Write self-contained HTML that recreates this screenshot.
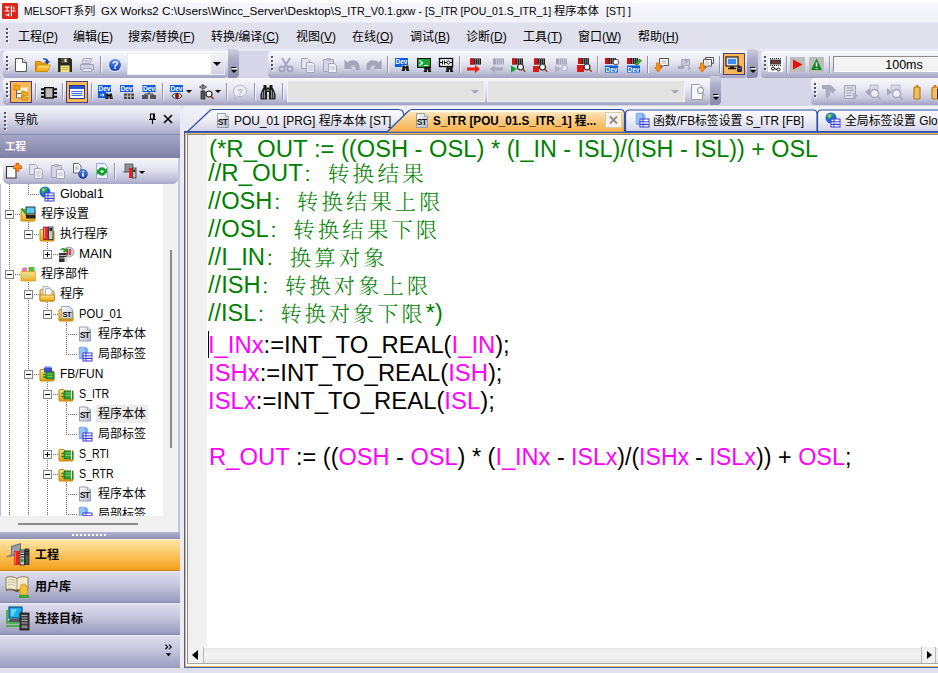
<!DOCTYPE html>
<html lang="zh-CN">
<head>
<meta charset="utf-8">
<title>MELSOFT GX Works2</title>
<style>
*{box-sizing:border-box;margin:0;padding:0}
html,body{width:938px;height:673px;overflow:hidden}
body{position:relative;background:#dedeee;font-family:"Liberation Sans","Noto Sans CJK SC",sans-serif;font-size:12px;color:#000}
.abs,.abs-all *{position:absolute}
.sx{display:inline-block;transform-origin:0 50%;white-space:pre}
svg{position:absolute;overflow:visible}
#title{left:0;top:0;width:938px;height:22px;background:linear-gradient(#fff 0,#fff 2px,#f5f5fb 3px,#f1f1f8 100%)}
#title .t{left:23px;top:2.5px;height:16px;line-height:16px;font-size:11px}
#menu{left:0;top:22px;width:938px;height:29px;background:linear-gradient(#ececf5 0,#e1e1ed 1.5px,#e0e0ec 26px,#e9e9f3 27.5px,#e9e9f3 100%)}
#menu .m{top:6.5px;height:16px;line-height:16px;font-size:12px;white-space:pre}
.grip{width:3px}
.grip i{display:block;width:2px;height:2px;background:#50506e;margin-bottom:2px;box-shadow:1px 1px 0 #fff}
.tbrow{left:0;width:938px;height:28px;background:#d6d6e8}
.panel{top:0;height:27px;border-radius:4px 0 4px 4px;background:linear-gradient(#f8f8fc 0,#e8e8f3 38%,#c8c8de 74%,#a2a2c2 100%)}
.ovf{top:-2px;height:29px;width:11px;border-radius:0 4px 4px 0;background:linear-gradient(#d0d0e2 0,#b0b0cc 30%,#8a8aac 100%)}
.ovf:after{content:"";position:absolute;left:3px;top:18px;width:5px;height:1px;background:#000;box-shadow:1px 1px 0 #fff}
.ovf:before{content:"";position:absolute;left:3px;top:21px;border:3px solid transparent;border-top:3px solid #000;border-bottom:0;width:0;height:0}
.sep{top:5px;width:2px;height:17px;border-left:1px solid #9292ae;border-right:1px solid #f6f6fc}
.hot{width:22px;height:22px;top:3px;background:#fbb755;border:1px solid #4c3e78}
.ic{width:16px;height:16px;top:6px}
.combo{top:3px;height:22px}
#nav{left:0;top:106px;width:180px;height:562px;background:#d8d8ea}
#nav svg,#tree svg{position:absolute}
#code{left:0;top:0;width:938px;height:0;font-family:"Liberation Sans","Noto Serif CJK SC",sans-serif;font-size:23.5px}
#code .ln{position:absolute;left:208px;height:0;line-height:0;white-space:pre}
#code .ln .sx{position:absolute;left:0;top:-21px;height:28px;line-height:28px;transform-origin:0 75%}
#code .g{color:#008000}
#code b{font-weight:normal;color:#ff00ff}
#code .zh{font-family:"Noto Serif CJK SC",serif;font-size:21px;letter-spacing:3.3px;font-weight:300}
</style>
</head>
<body>
<svg width="0" height="0" style="left:-10px;top:-10px"><defs>
<linearGradient id="gy" x1="0" y1="0" x2="0" y2="1"><stop offset="0" stop-color="#ffe27a"/><stop offset="1" stop-color="#f0a400"/></linearGradient>
<linearGradient id="gb" x1="0" y1="0" x2="0" y2="1"><stop offset="0" stop-color="#5c8cf0"/><stop offset="1" stop-color="#0a3cb4"/></linearGradient>
<linearGradient id="gf" x1="0" y1="0" x2="0" y2="1"><stop offset="0" stop-color="#ffe48a"/><stop offset="1" stop-color="#e8a410"/></linearGradient>
<linearGradient id="gst" x1="0" y1="0" x2="1" y2="1"><stop offset="0" stop-color="#fff"/><stop offset="1" stop-color="#b4bccc"/></linearGradient>
</defs></svg>
<div id="title" class="abs">
  <svg style="left:2px;top:3px" width="16" height="16" viewBox="0 0 17 17"><rect width="17" height="17" rx="1.5" fill="#de241b"/><path d="M3 4.5h5M5.5 4.5v4M3 8.5h5M10 3v11M10 8.5h4.5M12.5 4v3M7 11v3M4 12.5h3" stroke="#fff" stroke-width="1.3" fill="none"/></svg>
  <div class="abs t" id="ttl"><span class="sx abs" style="left:1px;top:0;transform:scaleX(0.9335)">MELSOFT</span><span class="sx abs" style="left:50.3px;top:0;transform:scaleX(1.0)">系列</span><span class="sx abs" style="left:78.2px;top:0;transform:scaleX(1.0289)">GX Works2 </span><span class="sx abs" style="left:139px;top:0;transform:scaleX(1.0699)">C:\Users\Wincc_Server\Desktop\</span><span class="sx abs" style="left:311px;top:0;transform:scaleX(0.9856)">S_ITR_V0.1.gxw - </span><span class="sx abs" style="left:402px;top:0;transform:scaleX(0.9547)">[S_ITR [POU_01.S_ITR_1] </span><span class="sx abs" style="left:531px;top:0;transform:scaleX(1.02)">程序本体</span><span class="sx abs" style="left:582.5px;top:0;transform:scaleX(0.9512)">[ST] ]</span></div>
</div>
<div id="menu" class="abs">
  <div class="abs grip" style="left:6px;top:6px"><i></i><i></i><i></i><i></i></div>
  <div class="abs m" style="left:18px"><span class="sx">工程(<u>P</u>)</span></div>
  <div class="abs m" style="left:73px"><span class="sx">编辑(<u>E</u>)</span></div>
  <div class="abs m" style="left:128px"><span class="sx">搜索/替换(<u>F</u>)</span></div>
  <div class="abs m" style="left:211px"><span class="sx">转换/编译(<u>C</u>)</span></div>
  <div class="abs m" style="left:296px"><span class="sx">视图(<u>V</u>)</span></div>
  <div class="abs m" style="left:352px"><span class="sx">在线(<u>O</u>)</span></div>
  <div class="abs m" style="left:410px"><span class="sx">调试(<u>B</u>)</span></div>
  <div class="abs m" style="left:466px"><span class="sx">诊断(<u>D</u>)</span></div>
  <div class="abs m" style="left:523px"><span class="sx">工具(<u>T</u>)</span></div>
  <div class="abs m" style="left:578px"><span class="sx">窗口(<u>W</u>)</span></div>
  <div class="abs m" style="left:638px"><span class="sx">帮助(<u>H</u>)</span></div>
</div>
<div class="abs tbrow" style="top:51px">
<div class="abs panel" style="left:3px;width:225px"></div><div class="abs ovf" style="left:228px"></div>
<div class="abs grip" style="left:6px;top:5px"><i></i><i></i><i></i><i></i></div>
<svg class="ic" style="left:13px;top:6px" viewBox="0 0 16 16"><g><path d="M2.500 1.500h7l4 4v9h-11z" fill="#fff" stroke="#555" stroke-width="1"/><path d="M9.500 1.500v4h4" fill="#e8e8e8" stroke="#555" stroke-width="1"/></g></svg>
<svg class="ic" style="left:35px;top:6px" viewBox="0 0 16 16"><g><path d="M.5 4.500h5l1 1.500h5.500v8.500H.5z" fill="#e8a000" stroke="#b87400" stroke-width=".8"/><path d="M.5 14.500L3 8h12.500l-3 6.500z" fill="url(#gy)" stroke="#c88a00" stroke-width=".8"/><path d="M8 1.500c3-.8 5 .5 5.300 2.800h1.900l-2.900 3-2.900-3h1.700C11 3 9.800 2.200 8 2.800z" fill="#1446b4"/></g></svg>
<svg class="ic" style="left:57px;top:6px" viewBox="0 0 16 16"><g><path d="M1 1h12.500L15 2.500V15H1z" fill="#2c2c1c"/><rect x="4" y="1" width="7" height="5" fill="#50503c"/><rect x="7.500" y="1.800" width="2" height="3.200" fill="#e8e8e8"/><rect x="3.500" y="8.500" width="9" height="6.500" fill="#f4e48c"/><path d="M4.500 10.500h7M4.500 12.500h7" stroke="#c0a840" stroke-width=".9"/></g></svg>
<svg class="ic" style="left:79px;top:6px" viewBox="0 0 16 16"><g><path d="M4.500 1.500h8l-1.500 5h-8z" fill="#e8e8f2" stroke="#a8a8bc"/><path d="M1.500 7.500h13v5h-13z" fill="#d0d0de" stroke="#a4a4b8"/><path d="M3.500 11.500h9v3h-9z" fill="#e4e4ee" stroke="#a8a8bc"/><path d="M5.500 3.500h5M5 5h5" stroke="#b4b4c6" stroke-width=".8"/></g></svg>
<div class="abs sep" style="left:100px"></div>
<svg class="ic" style="left:107px;top:6px" viewBox="0 0 16 16"><g><circle cx="8" cy="8" r="7" fill="#e8eefc"/><circle cx="8" cy="8" r="6" fill="url(#gb)"/><text x="8" y="12" font-family="Liberation Sans,sans-serif" font-size="11" font-weight="bold" fill="#fff" text-anchor="middle">?</text></g></svg>
<div class="abs combo" style="left:127px;width:98px;top:2px;background:#fff;border:1px solid #e9e9f3"><div class="abs" style="right:0;top:0;width:13px;height:20px;background:linear-gradient(#f4f4fa,#d0d0e2)"></div><div class="abs" style="right:3px;top:8px;border:4px solid transparent;border-top:4px solid #000;border-bottom:0"></div></div>
<div class="abs panel" style="left:268px;width:479px"></div><div class="abs ovf" style="left:747px"></div>
<div class="abs grip" style="left:271px;top:5px"><i></i><i></i><i></i><i></i></div>
<svg class="ic" style="left:278px;top:6px" viewBox="0 0 16 16"><g><path d="M4 1l5.500 9M12 1L6.500 10" stroke="#a2a2b8" stroke-width="1.800" fill="none"/><circle cx="4" cy="12" r="2.600" fill="none" stroke="#a2a2b8" stroke-width="1.700"/><circle cx="12" cy="12" r="2.600" fill="none" stroke="#a2a2b8" stroke-width="1.700"/></g></svg>
<svg class="ic" style="left:300px;top:6px" viewBox="0 0 16 16"><g><path d="M1.500 1.500h6l2 2v8h-8z" fill="#e4e4ee" stroke="#a6a6ba"/><path d="M6.500 5.500h6l2 2v8h-8z" fill="#eeeef6" stroke="#a6a6ba"/><path d="M8 9h5M8 11h5M8 13h5" stroke="#b8b8c8" stroke-width=".8"/></g></svg>
<svg class="ic" style="left:322px;top:6px" viewBox="0 0 16 16"><g><path d="M1.500 2.500h10v12h-10z" fill="#d4d4e2" stroke="#a6a6ba"/><rect x="4" y="1" width="5" height="3" fill="#b8b8cc"/><path d="M6.500 6.500h6l2 2v7h-8z" fill="#eeeef6" stroke="#a6a6ba"/><path d="M8 10h5M8 12h5" stroke="#b8b8c8" stroke-width=".8"/></g></svg>
<svg class="ic" style="left:344px;top:6px" viewBox="0 0 16 16"><g><path d="M.5 2.500v9.500h9l-3-3c2.500-2 5.500-.5 5.500 4h3.500v-4C15 3 7 1.500 3.500 5.500z" fill="#a4a4ba"/><circle cx="9.500" cy="11.500" r="2.300" fill="#d0d0de" stroke="#b4b4c8" stroke-width=".8"/></g></svg>
<svg class="ic" style="left:366px;top:6px" viewBox="0 0 16 16"><g><path d="M15.500 2.500v9.500h-9l3-3c-2.500-2-5.500-.5-5.500 4H.5v-4C1 3 9 1.500 12.500 5.500z" fill="#a4a4ba"/><circle cx="6.500" cy="11.500" r="2.300" fill="#d0d0de" stroke="#b4b4c8" stroke-width=".8"/></g></svg>
<div class="abs sep" style="left:387px"></div>
<svg class="ic" style="left:394px;top:6px" viewBox="0 0 16 16"><g><g transform="translate(1,1)"><rect x="0" y="0" width="13" height="7" fill="#0a5cd8"/><text x="6.500" y="6" font-family="Liberation Sans,sans-serif" font-size="7.400" font-weight="bold" fill="#fff" text-anchor="middle" textLength="12" lengthAdjust="spacingAndGlyphs">Dev</text></g><rect x="1" y="8" width="7" height="2" fill="#0a5cd8"/><g transform="translate(7.500,5.500)"><path d="M1 3h2.2v1h1.6V3H7v1l.8 4.5H4.6V6H3.4v2.500H.2L1 4z" fill="#111"/><path d="M1.300 5v2.5M6.700 5v2.500" stroke="#777" stroke-width=".7"/></g></g></svg>
<svg class="ic" style="left:416px;top:6px" viewBox="0 0 16 16"><g><rect x="1.500" y="1.500" width="13" height="9" fill="#18a838" stroke="#111"/><path d="M3.500 3.500l3 2.500-3 2.500M8 8.500h4" stroke="#fff" stroke-width="1.200" fill="none"/><g transform="translate(7.500,6.500)"><path d="M1 3h2.2v1h1.6V3H7v1l.8 4.5H4.6V6H3.4v2.500H.2L1 4z" fill="#111"/><path d="M1.300 5v2.5M6.700 5v2.500" stroke="#777" stroke-width=".7"/></g></g></svg>
<svg class="ic" style="left:438px;top:6px" viewBox="0 0 16 16"><g><rect x="1.500" y="1.500" width="13" height="8" fill="#fff" stroke="#111" stroke-width="1.400"/><path d="M1.500 5.500h3M4.500 3.500v4M6.500 3.500v4M6.500 5.500h2.500M12 5.500h2.500" stroke="#111" stroke-width="1"/><circle cx="10.500" cy="5.500" r="1.600" fill="none" stroke="#111"/><g transform="translate(7.500,6.500)"><path d="M1 3h2.2v1h1.6V3H7v1l.8 4.5H4.6V6H3.4v2.500H.2L1 4z" fill="#111"/><path d="M1.300 5v2.5M6.700 5v2.500" stroke="#777" stroke-width=".7"/></g></g></svg>
<div class="abs sep" style="left:459px"></div>
<svg class="ic" style="left:466px;top:6px" viewBox="0 0 16 16"><g><g transform="translate(4,1.500)"><rect x="0" y="0" width="11" height="6" fill="#222"/><rect x="0" y="0" width="4" height="6" fill="#d01010"/><path d="M5.500 0v6M7.500 0v6M9.500 0v6" stroke="#888" stroke-width=".8"/></g><path d="M1 10.500h8V8l5 4-5 4v-2.500H1z" fill="#e82010"/></g></svg>
<svg class="ic" style="left:488px;top:6px" viewBox="0 0 16 16"><g><g transform="translate(5,1.500)"><rect x="0" y="0" width="11" height="6" fill="#a4a4b8"/><path d="M3.500 0v6M5.500 0v6M7.500 0v6M9.500 0v6" stroke="#d0d0e0" stroke-width=".8"/></g><path d="M15 10.500H7V8l-5 4 5 4v-2.500h8z" fill="#a8a8bc"/></g></svg>
<svg class="ic" style="left:510px;top:6px" viewBox="0 0 16 16"><g><g transform="translate(2,1.500)"><rect x="0" y="0" width="11" height="6" fill="#222"/><rect x="0" y="0" width="4" height="6" fill="#d01010"/><path d="M5.500 0v6M7.500 0v6M9.500 0v6" stroke="#888" stroke-width=".8"/></g><path d="M1 8.500l6 3.500-6 3.500z" fill="#10a030"/><g transform="translate(7,6.500)"><circle cx="3.500" cy="3.500" r="3" fill="#fff" stroke="#222" stroke-width="1.200"/><path d="M5.800 5.800l2.400 2.400" stroke="#a04010" stroke-width="1.600"/></g></g></svg>
<svg class="ic" style="left:532px;top:6px" viewBox="0 0 16 16"><g><g transform="translate(2,1.500)"><rect x="0" y="0" width="11" height="6" fill="#222"/><rect x="0" y="0" width="4" height="6" fill="#d01010"/><path d="M5.500 0v6M7.500 0v6M9.500 0v6" stroke="#888" stroke-width=".8"/></g><rect x="1" y="9" width="6" height="6" fill="#e01818"/><g transform="translate(7,6.500)"><circle cx="3.500" cy="3.500" r="3" fill="#fff" stroke="#222" stroke-width="1.200"/><path d="M5.800 5.800l2.400 2.400" stroke="#a04010" stroke-width="1.600"/></g></g></svg>
<svg class="ic" style="left:554px;top:6px" viewBox="0 0 16 16"><g><g transform="translate(2,1.500)"><rect x="0" y="0" width="11" height="6" fill="#a4a4b8"/><path d="M3.500 0v6M5.500 0v6M7.500 0v6M9.500 0v6" stroke="#d0d0e0" stroke-width=".8"/></g><path d="M1 8.500l6 3.500-6 3.500z" fill="#b0b0c4"/><circle cx="10.500" cy="11" r="3" fill="#e4e4ee" stroke="#b0b0c4"/></g></svg>
<svg class="ic" style="left:576px;top:6px" viewBox="0 0 16 16"><g><g transform="translate(2,1)"><rect x="0" y="0" width="11" height="6" fill="#222"/><rect x="0" y="0" width="4" height="6" fill="#d01010"/><path d="M5.500 0v6M7.500 0v6M9.500 0v6" stroke="#888" stroke-width=".8"/></g><rect x="1" y="8" width="7" height="7" fill="#e01818"/><g transform="translate(7.500,6.500)"><circle cx="3.500" cy="3.500" r="3" fill="#fff" stroke="#222" stroke-width="1.200"/><path d="M5.800 5.800l2.400 2.400" stroke="#a04010" stroke-width="1.600"/></g></g></svg>
<div class="abs sep" style="left:597px"></div>
<svg class="ic" style="left:604px;top:6px" viewBox="0 0 16 16"><g><g transform="translate(1,1)"><rect x="0" y="0" width="11" height="6" fill="#222"/><rect x="0" y="0" width="4" height="6" fill="#d01010"/><path d="M5.500 0v6M7.500 0v6M9.500 0v6" stroke="#888" stroke-width=".8"/></g><circle cx="12" cy="5" r="2.800" fill="#fff" stroke="#333" stroke-width=".8"/><g transform="translate(1,8.500)"><rect x="0" y="0" width="13" height="7" fill="#0a5cd8"/><text x="6.500" y="6" font-family="Liberation Sans,sans-serif" font-size="7.400" font-weight="bold" fill="#fff" text-anchor="middle" textLength="12" lengthAdjust="spacingAndGlyphs">Dev</text></g></g></svg>
<svg class="ic" style="left:626px;top:6px" viewBox="0 0 16 16"><g><g transform="translate(1,1)"><rect x="0" y="0" width="11" height="6" fill="#222"/><rect x="0" y="0" width="4" height="6" fill="#d01010"/><path d="M5.500 0v6M7.500 0v6M9.500 0v6" stroke="#888" stroke-width=".8"/></g><path d="M9 7l4.500-5 2 1.800L11 8.500z" fill="#30b020" stroke="#106010" stroke-width=".6"/><g transform="translate(1,8.500)"><rect x="0" y="0" width="13" height="7" fill="#0a5cd8"/><text x="6.500" y="6" font-family="Liberation Sans,sans-serif" font-size="7.400" font-weight="bold" fill="#fff" text-anchor="middle" textLength="12" lengthAdjust="spacingAndGlyphs">Dev</text></g></g></svg>
<div class="abs sep" style="left:647px"></div>
<svg class="ic" style="left:654px;top:6px" viewBox="0 0 16 16"><g><path d="M5.500 1.500h9v7h-5l-2 2v-2h-2z" fill="#fff" stroke="#555" stroke-width="1"/><path d="M7.500 4h5M7.500 6h5" stroke="#999" stroke-width=".8"/><path d="M2.500 6h3.500v4.500H8l-3.800 4.500L.5 10.500h2z" fill="#f89010" stroke="#c05800" stroke-width=".6"/></g></svg>
<svg class="ic" style="left:676px;top:6px" viewBox="0 0 16 16"><g><path d="M5.500 2.500h8v6h-4l-2 2v-2h-2z" fill="#c8c8d8" stroke="#a8a8bc"/><path d="M9 1l3 3-3 3zM2 9h6v3H2z" fill="#a8a8bc"/><path d="M12 8l3 3-3 3z" fill="#b4b4c6"/></g></svg>
<svg class="ic" style="left:698px;top:6px" viewBox="0 0 16 16"><g><path d="M7.500 .5h8v6h-8z" fill="#fff" stroke="#555"/><path d="M5.500 2.500h8v6.500h-4l-2 2v-2h-2z" fill="#fff" stroke="#555"/><path d="M7.500 5h4M7.500 7h4" stroke="#999" stroke-width=".8"/><path d="M2.500 6h3.500v4.500H8l-3.800 4.500L.5 10.500h2z" fill="#f89010" stroke="#c05800" stroke-width=".6"/></g></svg>
<div class="abs sep" style="left:719px"></div>
<div class="abs hot" style="left:723px;top:2px"></div>
<svg class="ic" style="left:726px;top:5px" viewBox="0 0 16 16"><g><rect x="0" y="1" width="12" height="9" fill="#fff" stroke="#1a1a1a" stroke-width="1.200"/><rect x="1.800" y="2.800" width="8.400" height="5.400" fill="#3a8cf2"/><path d="M4 10.500h4v1.500H4zM2 11.800h8v1.400H2z" fill="#111"/><rect x="11" y="11" width="5" height="5" rx="1" fill="#2a2a3a"/><path d="M11.500 11v-1.500l1 1 1-1.500 1 1.500 1-1V11" fill="#2a2a3a"/><rect x="12" y="12" width="3" height="1.300" fill="#3a6cc8"/></g></svg>
<div class="abs panel" style="left:761px;width:190px"></div>
<div class="abs grip" style="left:764px;top:5px"><i></i><i></i><i></i><i></i></div>
<svg class="ic" style="left:768px;top:6px" viewBox="0 0 16 16"><g><rect x="0" y="0" width="15" height="15" fill="#fff"/><rect x="2" y="2.500" width="11" height="5" fill="#444"/><path d="M2 1.500h11M2 8.500h11" stroke="#222" stroke-dasharray="1 1"/><path d="M6 3.500l3.500 1.500L6 6.500z" fill="#e01010"/><circle cx="5" cy="11.500" r="1.500" fill="none" stroke="#111"/><circle cx="10.500" cy="12.500" r="1.500" fill="none" stroke="#111"/><path d="M6.500 11.800l2.500.5" stroke="#111"/></g></svg>
<div class="abs sep" style="left:786px"></div>
<svg class="ic" style="left:790px;top:6px" viewBox="0 0 16 16"><g><rect x="0" y="0" width="15" height="15" fill="#bcbcbc"/><path d="M3 2.500l9.500 5-9.500 5z" fill="#e80c0c"/></g></svg>
<svg class="ic" style="left:809px;top:6px" viewBox="0 0 16 16"><g><rect x="0" y="0" width="15" height="15" fill="#bcbcbc"/><path d="M7.500 1.500l5.500 11.500H2z" fill="#0c8c1c"/><path d="M7.500 5.500v4M7.500 11v1" stroke="#fff" stroke-width="1.500"/></g></svg>
<div class="abs sep" style="left:829px"></div>
<div class="abs" style="left:833px;top:5px;width:120px;height:16px;background:#f3f3f3;border-top:1px solid #8e8e8e;border-left:1px solid #8e8e8e;border-bottom:1px solid #fff"></div>
<div class="abs" style="left:870px;top:6px;width:68px;height:17px;line-height:17px;text-align:center;font-size:12.5px">100ms</div>
</div>
<div class="abs tbrow" style="top:78px">
<div class="abs panel" style="left:3px;width:707px"></div><div class="abs ovf" style="left:710px"></div>
<div class="abs grip" style="left:6px;top:5px"><i></i><i></i><i></i><i></i></div>
<div class="abs hot" style="left:10px"></div>
<svg class="ic" style="left:13px;top:6px" viewBox="0 0 16 16"><g><rect x="3" y="3.500" width="11.500" height="11" fill="#fff" opacity=".85"/><path d="M1 1h4l1 1h1v4H1z" fill="#f0a818" stroke="#b87800" stroke-width=".6"/><path d="M3.500 6v8h5M3.500 9.500h5" stroke="#666" fill="none"/><path d="M8.500 7h3l1 1h2v3.500h-6z" fill="#f0a818" stroke="#b87800" stroke-width=".6"/><path d="M8.500 12h3l1 1h2v3h-6z" fill="#f0a818" stroke="#b87800" stroke-width=".6"/></g></svg>
<div class="abs sep" style="left:35px"></div>
<svg class="ic" style="left:41px;top:6px" viewBox="0 0 16 16"><g><rect x="3" y="3" width="10" height="11.700" fill="#0c0c0c"/><rect x="4.500" y="4.300" width="7" height="9" fill="#bcbcbc"/><path d="M0 5.200h3M0 9h3M0 12.800h3M13 5.200h3M13 9h3M13 12.800h3" stroke="#0c0c0c" stroke-width="1.900"/></g></svg>
<div class="abs sep" style="left:62px"></div>
<div class="abs hot" style="left:66px"></div>
<svg class="ic" style="left:69px;top:6px" viewBox="0 0 16 16"><g><rect x=".5" y="1.500" width="15" height="13" fill="#fff" stroke="#223c8c"/><rect x="1" y="2" width="14" height="3" fill="#2458d0"/><path d="M2.500 7.500h11M2.500 9.500h11M2.500 11.500h11" stroke="#3c6cd8" stroke-width="1"/></g></svg>
<div class="abs sep" style="left:91px"></div>
<svg class="ic" style="left:97px;top:6px" viewBox="0 0 16 16"><g><g transform="translate(1,1)"><rect x="0" y="0" width="13" height="7" fill="#0a5cd8"/><text x="6.500" y="6" font-family="Liberation Sans,sans-serif" font-size="7.400" font-weight="bold" fill="#fff" text-anchor="middle" textLength="12" lengthAdjust="spacingAndGlyphs">Dev</text></g><rect x="1" y="8" width="8" height="6" fill="#0a5cd8"/><path d="M3 11h4l-1.500-1.500M7 11l-1.500 1.500" stroke="#fff" stroke-width=".9" fill="none"/><g transform="translate(8,6.500)"><path d="M1 3h2.2v1h1.6V3H7v1l.8 4.5H4.6V6H3.4v2.500H.2L1 4z" fill="#111"/><path d="M1.300 5v2.5M6.700 5v2.500" stroke="#777" stroke-width=".7"/></g></g></svg>
<svg class="ic" style="left:119px;top:6px" viewBox="0 0 16 16"><g><g transform="translate(1,1)"><rect x="0" y="0" width="13" height="7" fill="#0a5cd8"/><text x="6.500" y="6" font-family="Liberation Sans,sans-serif" font-size="7.400" font-weight="bold" fill="#fff" text-anchor="middle" textLength="12" lengthAdjust="spacingAndGlyphs">Dev</text></g><rect x="5" y="9.500" width="10" height="5.500" fill="#444"/><path d="M5 12.200h10M8.300 9.500v5.500M11.700 9.500v5.500" stroke="#ddd" stroke-width=".8"/></g></svg>
<svg class="ic" style="left:141px;top:6px" viewBox="0 0 16 16"><g><g transform="translate(1.500,1)"><rect x="0" y="0" width="13" height="7" fill="#0a5cd8"/><text x="6.500" y="6" font-family="Liberation Sans,sans-serif" font-size="7.400" font-weight="bold" fill="#fff" text-anchor="middle" textLength="12" lengthAdjust="spacingAndGlyphs">Dev</text></g><path d="M8 8v2M4 10h8M4 10v1.500M12 10v1.500" stroke="#333" fill="none"/><rect x="1" y="11" width="6" height="4" fill="#555"/><rect x="9" y="11" width="6" height="4" fill="#555"/></g></svg>
<div class="abs sep" style="left:162px"></div>
<svg class="ic" style="left:169px;top:6px" viewBox="0 0 16 16"><g><g transform="translate(1,1)"><rect x="0" y="0" width="13" height="7" fill="#0a5cd8"/><text x="6.500" y="6" font-family="Liberation Sans,sans-serif" font-size="7.400" font-weight="bold" fill="#fff" text-anchor="middle" textLength="12" lengthAdjust="spacingAndGlyphs">Dev</text></g><path d="M3 12c2-3.500 8-3.500 10 0-2 3.500-8 3.500-10 0z" fill="#fff" stroke="#222" stroke-width="1"/><circle cx="8" cy="12" r="2.200" fill="#a01010"/></g></svg>
<div class="abs" style="left:186px;top:12px;border:3px solid transparent;border-top:3px solid #000;border-bottom:0"></div>
<svg class="ic" style="left:198px;top:6px" viewBox="0 0 16 16"><g><rect x="3" y="7" width="4" height="8" fill="#555" stroke="#222" stroke-width=".7"/><path d="M5 0v7M1 3h8" stroke="#444" stroke-width=".9"/><ellipse cx="5" cy="3" rx="2.500" ry="1.800" fill="none" stroke="#444" stroke-width=".8"/><circle cx="11" cy="10" r="3" fill="#fff" stroke="#222" stroke-width="1.200"/><path d="M13.200 12.200l2.300 2.800" stroke="#a04010" stroke-width="1.600"/></g></svg>
<div class="abs" style="left:215px;top:12px;border:3px solid transparent;border-top:3px solid #000;border-bottom:0"></div>
<div class="abs sep" style="left:226px"></div>
<svg class="ic" style="left:232px;top:6px" viewBox="0 0 16 16"><g><path d="M8 1.500c4 0 6.500 2.500 6.500 5.500S12 12.500 8 12.500c-.8 0-1.500-.1-2.200-.3L3 15l.3-3.800C2 10.200 1.500 8.700 1.500 7c0-3 2.500-5.500 6.500-5.500z" fill="#ececf4" stroke="#b4b4c6"/><text x="8" y="10.500" font-family="Liberation Sans,sans-serif" font-size="9" font-weight="bold" fill="#b4b4c6" text-anchor="middle">?</text></g></svg>
<div class="abs sep" style="left:254px"></div>
<svg class="ic" style="left:260px;top:6px" viewBox="0 0 16 16"><g><path d="M3.500 1h3v2.500h3V1h3v2.500l1 1.500 2 5v5.500h-6.500V8h-2v7.500H.5V10l2-5 1-1.500z" fill="#1c1c1c"/><path d="M2.500 8v6.500M4.500 6v8.500M13.500 8v6.500M11.500 6v8.500" stroke="#8c8c8c" stroke-width="1.200"/><rect x="6.500" y="5" width="3" height="2" fill="#666"/></g></svg>
<div class="abs sep" style="left:282px"></div>
<div class="abs combo" style="left:287px;width:198px;top:2px;background:#e3e3e3;border:1px solid #f2f2f8"><div class="abs" style="right:5px;top:9px;border:4px solid transparent;border-top:4px solid #a9a9bd;border-bottom:0"></div></div>
<div class="abs combo" style="left:487px;width:198px;top:2px;background:#e3e3e3;border:1px solid #f2f2f8"><div class="abs" style="right:5px;top:9px;border:4px solid transparent;border-top:4px solid #a9a9bd;border-bottom:0"></div></div>
<svg class="ic" style="left:690px;top:6px" viewBox="0 0 16 16"><g><path d="M1.500 .5h8l3 3v12h-11z" fill="#f6f6fa" stroke="#9c9cb0"/><circle cx="10.500" cy="6.500" r="3" fill="#fff" stroke="#9c9cb0" stroke-width="1.100"/><path d="M12.500 9l2 2.500" stroke="#b0b0c0" stroke-width="1.400"/></g></svg>
<div class="abs panel" style="left:811px;width:140px"></div>
<div class="abs grip" style="left:814px;top:5px"><i></i><i></i><i></i><i></i></div>
<svg class="ic" style="left:821px;top:6px" viewBox="0 0 16 16"><g><path d="M1 1h9l5 5-3.500 3.500L9 7v4l-3 4.500L4.500 11V5H1z" fill="#aaaac0"/></g></svg>
<svg class="ic" style="left:843px;top:6px" viewBox="0 0 16 16"><g><path d="M1.500 1.500h11v13h-11z" fill="#dcdce8" stroke="#a4a4ba"/><path d="M3.500 4h7M3.500 6.500h7M3.500 9h5M3.500 11.500h5" stroke="#a4a4ba"/><path d="M10 8l5 3.500-5 3.500z" fill="#b0b0c4"/></g></svg>
<svg class="ic" style="left:865px;top:6px" viewBox="0 0 16 16"><g><path d="M0 8l5-4v8z" fill="#a8a8be"/><rect x="5" y="1" width="8" height="6" fill="#d8d8e6" stroke="#b0b0c4" stroke-width=".7"/><circle cx="9.500" cy="9.500" r="4" fill="#eeeef6" stroke="#a4a4ba" stroke-width="1.300"/><path d="M12.500 12.500l3 3" stroke="#a4a4ba" stroke-width="1.600"/></g></svg>
<svg class="ic" style="left:887px;top:6px" viewBox="0 0 16 16"><g><path d="M0 4l5 4-5 4z" fill="#a8a8be"/><rect x="4" y="1" width="9" height="6" fill="#d8d8e6" stroke="#b0b0c4" stroke-width=".7"/><circle cx="9.500" cy="9.500" r="4" fill="#eeeef6" stroke="#a4a4ba" stroke-width="1.300"/><path d="M12.500 12.500l3 3" stroke="#a4a4ba" stroke-width="1.600"/></g></svg>
<svg class="ic" style="left:909px;top:6px" viewBox="0 0 16 16"><g><rect x="5" y="3" width="6" height="12" rx="1" fill="#f0c060" stroke="#b87818" stroke-width="1.200"/><rect x="6.800" y="1" width="2.400" height="2.500" fill="#c88420"/></g></svg>
<svg class="ic" style="left:931px;top:6px" viewBox="0 0 16 16"><g><rect x="1" y="3" width="6" height="12" rx="1" fill="#f0c060" stroke="#b87818" stroke-width="1.200"/><rect x="2.800" y="1" width="2.400" height="2.500" fill="#c88420"/><rect x="6" y="5" width="4" height="10" fill="#333"/></g></svg>
</div>
<div id="nav" class="abs">
<div class="abs" style="left:0;top:0;width:180px;height:28px;background:linear-gradient(#f4f4fa 0,#dcdcec 45%,#a9a9c9 100%)"></div>
<div class="abs grip" style="left:4px;top:6px"><i></i><i></i><i></i><i></i><i></i></div>
<div class="abs" style="left:14px;top:6px;height:16px;line-height:16px;font-size:12px">导航</div>
<svg style="left:148px;top:7px" width="9" height="12" viewBox="0 0 9 12"><path d="M2.500 1h4v5h-4zM5.500 1v5M1 6.500h7M4.500 7v4" stroke="#000" fill="none" stroke-width="1.100"/></svg>
<svg style="left:163px;top:8px" width="10" height="10" viewBox="0 0 10 10"><path d="M1 1l8 8M9 1l-8 8" stroke="#000" stroke-width="1.700"/></svg>
<div class="abs" style="left:0;top:28px;width:180px;height:24px;background:linear-gradient(#a6a6c6,#7f7fa7);border-top:1px solid #8c8cb0"></div>
<div class="abs" style="left:5px;top:32px;height:16px;line-height:16px;font-size:10.500px;font-weight:bold;color:#fff">工程</div>
<div class="abs" style="left:0;top:52px;width:180px;height:27px;background:#fff"></div>
<div class="abs" style="left:3px;top:52px;width:175px;height:26px;border-radius:0 0 5px 5px;background:linear-gradient(#f6f6fb 0,#e2e2ef 45%,#bcbcd6 85%,#a8a8c8 100%)"></div>
<svg style="left:5px;top:57px;width:16px;height:16px" viewBox="0 0 16 16"><g><path d="M1.500 3.500h9.500v11.500H1.500z" fill="#fff" stroke="#333" stroke-width="1.100"/><path d="M12.500 0v8.500M8.200 4.200h8.600" stroke="#c85000" stroke-width="3.600"/><path d="M12.500 .7v7.100M8.900 4.200h7.200" stroke="#ff8c1a" stroke-width="2.200"/></g></svg>
<svg style="left:28px;top:57px;width:16px;height:16px" viewBox="0 0 16 16"><g><path d="M1.500 1.500h6l2 2v8h-8z" fill="#e4e4ee" stroke="#a6a6ba"/><path d="M6.500 5.500h6l2 2v8h-8z" fill="#eeeef6" stroke="#a6a6ba"/><path d="M8 9h5M8 11h5M8 13h5" stroke="#b8b8c8" stroke-width=".8"/></g></svg>
<svg style="left:50px;top:57px;width:16px;height:16px" viewBox="0 0 16 16"><g><path d="M1.500 2.500h10v12h-10z" fill="#d4d4e2" stroke="#a6a6ba"/><rect x="4" y="1" width="5" height="3" fill="#b8b8cc"/><path d="M6.500 6.500h6l2 2v7h-8z" fill="#eeeef6" stroke="#a6a6ba"/><path d="M8 10h5M8 12h5" stroke="#b8b8c8" stroke-width=".8"/></g></svg>
<svg style="left:72px;top:57px;width:16px;height:16px" viewBox="0 0 16 16"><g><path d="M1.500 .5h5l2.500 2.500v7h-7.500z" fill="#fff" stroke="#555" stroke-width=".9"/><path d="M3 4h4M3 6h4" stroke="#888" stroke-width=".8"/><circle cx="11" cy="11" r="4.500" fill="url(#gb)" stroke="#0a2c90" stroke-width=".5"/><path d="M11 8v1.200M11 10.200v3.500" stroke="#fff" stroke-width="1.700"/></g></svg>
<svg style="left:94px;top:57px;width:16px;height:16px" viewBox="0 0 16 16"><g><path d="M2.500 .5h8l3 3v12h-11z" fill="#e8f0fc" stroke="#90a4c8" stroke-width=".9"/><path d="M4 7.500c1-4 6-4 7.500-1l1.500-1.200V10H8.300l1.600-1.300C9 6.800 6.800 6.800 6 8.500zM12 9.500c-1 4-6 4-7.500 1L3 11.700V7h4.700L6.100 8.300c.9 1.900 3.100 1.900 3.900.2z" fill="#14a024"/></g></svg>
<div class="abs sep" style="left:114px;top:57px;height:16px"></div>
<svg style="left:122px;top:57px;width:16px;height:16px" viewBox="0 0 16 16"><g><rect x="3" y="1" width="8" height="8" fill="#909090" stroke="#444" stroke-width=".7"/><path d="M0 9l5-2v3z" fill="#777"/><rect x="7" y="5" width="3" height="10" fill="#e82020"/><rect x="10.500" y="5" width="3.500" height="10" fill="#bbb" stroke="#222" stroke-width=".7"/><rect x="11.300" y="6.500" width="2" height="2.500" fill="#222"/></g></svg>
<div class="abs" style="left:139px;top:65px;border:3px solid transparent;border-top:3px solid #000;border-bottom:0"></div>
<div class="abs" style="left:0;top:78px;width:163px;height:332px;background:#fff;overflow:hidden" id="tree">
<div class="abs" style="left:9px;top:0px;width:1px;height:332px;background:repeating-linear-gradient(#707070 0 1px,transparent 1px 2px)"></div>
<div class="abs" style="left:28px;top:0px;width:1px;height:10px;background:repeating-linear-gradient(#707070 0 1px,transparent 1px 2px)"></div>
<div class="abs" style="left:28px;top:36px;width:1px;height:14px;background:repeating-linear-gradient(#707070 0 1px,transparent 1px 2px)"></div>
<div class="abs" style="left:47px;top:56px;width:1px;height:14px;background:repeating-linear-gradient(#707070 0 1px,transparent 1px 2px)"></div>
<div class="abs" style="left:28px;top:96px;width:1px;height:236px;background:repeating-linear-gradient(#707070 0 1px,transparent 1px 2px)"></div>
<div class="abs" style="left:47px;top:116px;width:1px;height:14px;background:repeating-linear-gradient(#707070 0 1px,transparent 1px 2px)"></div>
<div class="abs" style="left:66px;top:136px;width:1px;height:34px;background:repeating-linear-gradient(#707070 0 1px,transparent 1px 2px)"></div>
<div class="abs" style="left:47px;top:196px;width:1px;height:136px;background:repeating-linear-gradient(#707070 0 1px,transparent 1px 2px)"></div>
<div class="abs" style="left:66px;top:216px;width:1px;height:34px;background:repeating-linear-gradient(#707070 0 1px,transparent 1px 2px)"></div>
<div class="abs" style="left:66px;top:296px;width:1px;height:36px;background:repeating-linear-gradient(#707070 0 1px,transparent 1px 2px)"></div>
<div class="abs" style="left:28px;top:10px;width:11px;height:1px;background:repeating-linear-gradient(90deg,#707070 0 1px,transparent 1px 2px)"></div>
<svg style="left:39px;top:2px;width:16px;height:16px" viewBox="0 0 16 16"><g><circle cx="6" cy="6" r="5.500" fill="#2468d8"/><path d="M3 2.500c2-1.500 4-1 5 0 .5 1.500-1 2-2 3S4.500 8 3.500 7 1.500 4 3 2.500zM8 8c1-.5 2.500 0 3 1-.5 1.500-2 2.300-3 2z" fill="#38b838"/><circle cx="4.300" cy="3.800" r="1.400" fill="#fff" opacity=".45"/><g transform="translate(5.500,6.500)"><rect x=".5" y=".5" width="9" height="8" fill="#fff" stroke="#3838d8" stroke-width="1"/><path d="M.5 3.300h9M.5 6h9M3.500 .5v8" stroke="#3838d8" stroke-width="1"/><rect x="4" y="3.800" width="5" height="1.700" fill="#c8c8ff"/></g></g></svg>
<div class="abs" style="left:58px;top:1px;height:18px;line-height:18px;padding:0 2px;font-size:12px;white-space:pre;width:48px"><span class="sx tr" style="transform:scaleX(1.056)">Global1</span></div>
<div class="abs" style="left:9px;top:30px;width:11px;height:1px;background:repeating-linear-gradient(90deg,#707070 0 1px,transparent 1px 2px)"></div>
<div class="abs" style="left:5px;top:26px;width:9px;height:9px;background:#fff;border:1px solid #848484"></div>
<div class="abs" style="left:7px;top:30px;width:5px;height:1px;background:#000"></div>
<svg style="left:20px;top:22px;width:16px;height:16px" viewBox="0 0 16 16"><g><g><path d="M1 4.500q0-1 1-1h3.500l1.500 1.500h7q1 0 1 1V14q0 1-1 1H2q-1 0-1-1z" fill="url(#gf)" stroke="#b87c08" stroke-width=".9"/></g><rect x="6" y="1" width="9" height="7" fill="#58c8f0" stroke="#223" stroke-width=".9"/><rect x="6" y="9" width="9.500" height="3.500" fill="#222"/><path d="M1.500 2.500l5.500 6" stroke="#28a028" stroke-width="2.200"/><path d="M6.500 8l1.500 2-2.300-.6z" fill="#111"/></g></svg>
<div class="abs" style="left:39px;top:21px;height:18px;line-height:18px;padding:0 2px;font-size:12px;white-space:pre"><span class="sx tr">程序设置</span></div>
<div class="abs" style="left:28px;top:50px;width:11px;height:1px;background:repeating-linear-gradient(90deg,#707070 0 1px,transparent 1px 2px)"></div>
<div class="abs" style="left:24px;top:46px;width:9px;height:9px;background:#fff;border:1px solid #848484"></div>
<div class="abs" style="left:26px;top:50px;width:5px;height:1px;background:#000"></div>
<svg style="left:39px;top:42px;width:16px;height:16px" viewBox="0 0 16 16"><g><g><path d="M1 4.500q0-1 1-1h3.500l1.500 1.500h7q1 0 1 1V14q0 1-1 1H2q-1 0-1-1z" fill="url(#gf)" stroke="#b87c08" stroke-width=".9"/></g><rect x="4.500" y="1" width="4.500" height="12.500" fill="#e83030" stroke="#801010" stroke-width=".6"/><rect x="9.500" y="1" width="4.500" height="12.500" fill="#c8c8c8" stroke="#222" stroke-width=".8"/><rect x="10.500" y="2" width="2.500" height="3" fill="#222"/><path d="M5.500 2v10" stroke="#ff9090" stroke-width=".9"/></g></svg>
<div class="abs" style="left:58px;top:41px;height:18px;line-height:18px;padding:0 2px;font-size:12px;white-space:pre"><span class="sx tr">执行程序</span></div>
<div class="abs" style="left:47px;top:70px;width:11px;height:1px;background:repeating-linear-gradient(90deg,#707070 0 1px,transparent 1px 2px)"></div>
<div class="abs" style="left:43px;top:66px;width:9px;height:9px;background:#fff;border:1px solid #848484"></div>
<div class="abs" style="left:45px;top:70px;width:5px;height:1px;background:#000"></div>
<div class="abs" style="left:47px;top:68px;width:1px;height:5px;background:#000"></div>
<svg style="left:58px;top:62px;width:16px;height:16px" viewBox="0 0 16 16"><g><circle cx="11" cy="6" r="5" fill="#c8ccd8" stroke="#8890a0" stroke-width=".7"/><path d="M9.500 3v6M12 3v6" stroke="#e01010" stroke-width="1.400"/><rect x="1" y="7" width="7.500" height="9" fill="#333"/><path d="M1.500 9.500h6.500M1.500 12h6.500" stroke="#bbb" stroke-width="1"/><rect x="6.500" y="11" width="3" height="5" fill="#ddd"/><path d="M2 4.500c1-3 4-3 5.500-1.500L9 1.500v4.500H4.500L6 4.500C5 3.500 3.500 3.500 2 4.500z" fill="#18a830"/></g></svg>
<div class="abs" style="left:77px;top:61px;height:18px;line-height:18px;padding:0 2px;font-size:12px;white-space:pre;width:37px"><span class="sx tr" style="transform:scaleX(1.1)">MAIN</span></div>
<div class="abs" style="left:9px;top:90px;width:11px;height:1px;background:repeating-linear-gradient(90deg,#707070 0 1px,transparent 1px 2px)"></div>
<div class="abs" style="left:5px;top:86px;width:9px;height:9px;background:#fff;border:1px solid #848484"></div>
<div class="abs" style="left:7px;top:90px;width:5px;height:1px;background:#000"></div>
<svg style="left:20px;top:82px;width:16px;height:16px" viewBox="0 0 16 16"><g><rect x="2" y="1.500" width="5" height="5" rx="1.500" fill="#f070b0"/><rect x="8.500" y="1" width="6" height="6" fill="#58b848"/><path d="M1 5.500h14.500V15H1z" fill="url(#gf)" stroke="#d8a018" stroke-width=".8" opacity=".93"/><rect x="3" y="8" width="6" height="4" fill="#c8d880" opacity=".8"/></g></svg>
<div class="abs" style="left:39px;top:81px;height:18px;line-height:18px;padding:0 2px;font-size:12px;white-space:pre"><span class="sx tr">程序部件</span></div>
<div class="abs" style="left:28px;top:110px;width:11px;height:1px;background:repeating-linear-gradient(90deg,#707070 0 1px,transparent 1px 2px)"></div>
<div class="abs" style="left:24px;top:106px;width:9px;height:9px;background:#fff;border:1px solid #848484"></div>
<div class="abs" style="left:26px;top:110px;width:5px;height:1px;background:#000"></div>
<svg style="left:39px;top:102px;width:16px;height:16px" viewBox="0 0 16 16"><g><g><path d="M1 4.500q0-1 1-1h3.500l1.500 1.500h7q1 0 1 1V14q0 1-1 1H2q-1 0-1-1z" fill="url(#gf)" stroke="#b87c08" stroke-width=".9"/></g><path d="M4 .5h5l3 3V12H4z" fill="#eef2f8" stroke="#98a0b0" stroke-width=".8"/><path d="M6.500 2.500h4l2.500 2.500V12h-6.500z" fill="#fff" stroke="#98a0b0" stroke-width=".8"/><path d="M1 9h14.500v5q0 1-1 1H2q-1 0-1-1z" fill="url(#gf)" stroke="#b87c08" stroke-width=".8"/></g></svg>
<div class="abs" style="left:58px;top:101px;height:18px;line-height:18px;padding:0 2px;font-size:12px;white-space:pre"><span class="sx tr">程序</span></div>
<div class="abs" style="left:47px;top:130px;width:11px;height:1px;background:repeating-linear-gradient(90deg,#707070 0 1px,transparent 1px 2px)"></div>
<div class="abs" style="left:43px;top:126px;width:9px;height:9px;background:#fff;border:1px solid #848484"></div>
<div class="abs" style="left:45px;top:130px;width:5px;height:1px;background:#000"></div>
<svg style="left:58px;top:122px;width:16px;height:16px" viewBox="0 0 16 16"><g><g><path d="M1 4.500q0-1 1-1h3.500l1.500 1.500h7q1 0 1 1V14q0 1-1 1H2q-1 0-1-1z" fill="url(#gf)" stroke="#b87c08" stroke-width=".9"/></g><path d="M3.500 .5h8l3 3V13h-11z" fill="url(#gst)" stroke="#8c94a4" stroke-width=".8"/><text x="8.800" y="10.500" font-family="Liberation Sans,sans-serif" font-size="7.500" font-weight="bold" fill="#111" text-anchor="middle" letter-spacing="-.4">ST</text><path d="M1 13.500h14.500" stroke="#c89010" stroke-width="2"/></g></svg>
<div class="abs" style="left:77px;top:121px;height:18px;line-height:18px;padding:0 2px;font-size:12px;white-space:pre;width:47px"><span class="sx tr" style="transform:scaleX(0.934)">POU_01</span></div>
<div class="abs" style="left:66px;top:150px;width:11px;height:1px;background:repeating-linear-gradient(90deg,#707070 0 1px,transparent 1px 2px)"></div>
<svg style="left:77px;top:142px;width:16px;height:16px" viewBox="0 0 16 16"><g><g transform="translate(2,.5)"><path d="M.5 .5h8l3 3v11H.5z" fill="url(#gst)" stroke="#8c94a4" stroke-width=".9"/><path d="M8.500 .5v3h3" fill="#e4e8f0" stroke="#8c94a4" stroke-width=".7"/><text x="5.600" y="11.500" font-family="Liberation Sans,sans-serif" font-size="8.500" font-weight="bold" fill="#111" text-anchor="middle" letter-spacing="-.6">ST</text></g></g></svg>
<div class="abs" style="left:96px;top:141px;height:18px;line-height:18px;padding:0 2px;font-size:12px;white-space:pre"><span class="sx tr">程序本体</span></div>
<div class="abs" style="left:66px;top:170px;width:11px;height:1px;background:repeating-linear-gradient(90deg,#707070 0 1px,transparent 1px 2px)"></div>
<svg style="left:77px;top:162px;width:16px;height:16px" viewBox="0 0 16 16"><g><path d="M2 1h7l2 2v10H2z" fill="#70a8f0" stroke="#a8c4ec" stroke-width=".8"/><path d="M3 2h5v9H3z" fill="#a4ccff" opacity=".7"/><g transform="translate(5.500,6.500)"><rect x=".5" y=".5" width="9" height="8" fill="#fff" stroke="#3838d8" stroke-width="1"/><path d="M.5 3.300h9M.5 6h9M3.500 .5v8" stroke="#3838d8" stroke-width="1"/><rect x="4" y="3.800" width="5" height="1.700" fill="#c8c8ff"/></g></g></svg>
<div class="abs" style="left:96px;top:161px;height:18px;line-height:18px;padding:0 2px;font-size:12px;white-space:pre"><span class="sx tr">局部标签</span></div>
<div class="abs" style="left:28px;top:190px;width:11px;height:1px;background:repeating-linear-gradient(90deg,#707070 0 1px,transparent 1px 2px)"></div>
<div class="abs" style="left:24px;top:186px;width:9px;height:9px;background:#fff;border:1px solid #848484"></div>
<div class="abs" style="left:26px;top:190px;width:5px;height:1px;background:#000"></div>
<svg style="left:39px;top:182px;width:16px;height:16px" viewBox="0 0 16 16"><g><g><path d="M1 4.500q0-1 1-1h3.500l1.500 1.500h7q1 0 1 1V14q0 1-1 1H2q-1 0-1-1z" fill="url(#gf)" stroke="#b87c08" stroke-width=".9"/></g><rect x="5" y="1.500" width="8" height="5" fill="#3850d0"/><path d="M6 1h6M7.500 .5v2" stroke="#6080f0" stroke-width="1"/><rect x="7" y="6" width="8" height="7" fill="#30a030" stroke="#186018" stroke-width=".6"/><path d="M4 8.500h4M4 11h4" stroke="#208020" stroke-width="1.300"/><path d="M8.500 8h5M8.500 10.500h5" stroke="#70d070" stroke-width=".9"/></g></svg>
<div class="abs" style="left:58px;top:181px;height:18px;line-height:18px;padding:0 2px;font-size:12px;white-space:pre"><span class="sx tr">FB/FUN</span></div>
<div class="abs" style="left:47px;top:210px;width:11px;height:1px;background:repeating-linear-gradient(90deg,#707070 0 1px,transparent 1px 2px)"></div>
<div class="abs" style="left:43px;top:206px;width:9px;height:9px;background:#fff;border:1px solid #848484"></div>
<div class="abs" style="left:45px;top:210px;width:5px;height:1px;background:#000"></div>
<svg style="left:58px;top:202px;width:16px;height:16px" viewBox="0 0 16 16"><g><g><path d="M1 4.500q0-1 1-1h3.500l1.500 1.500h7q1 0 1 1V14q0 1-1 1H2q-1 0-1-1z" fill="url(#gf)" stroke="#b87c08" stroke-width=".9"/></g><rect x="6" y="5" width="9" height="8" fill="#30a030" stroke="#186018" stroke-width=".6"/><path d="M3.500 7.500h3.500M3.500 10.500h3.500" stroke="#208020" stroke-width="1.400"/><path d="M7.500 7h6M7.500 9.500h6" stroke="#78d878" stroke-width=".9"/><path d="M13.500 4v9" stroke="#fff" stroke-width="1"/></g></svg>
<div class="abs" style="left:77px;top:201px;height:18px;line-height:18px;padding:0 2px;font-size:12px;white-space:pre;width:34px"><span class="sx tr" style="transform:scaleX(0.885)">S_ITR</span></div>
<div class="abs" style="left:66px;top:230px;width:11px;height:1px;background:repeating-linear-gradient(90deg,#707070 0 1px,transparent 1px 2px)"></div>
<svg style="left:77px;top:222px;width:16px;height:16px" viewBox="0 0 16 16"><g><g transform="translate(2,.5)"><path d="M.5 .5h8l3 3v11H.5z" fill="url(#gst)" stroke="#8c94a4" stroke-width=".9"/><path d="M8.500 .5v3h3" fill="#e4e8f0" stroke="#8c94a4" stroke-width=".7"/><text x="5.600" y="11.500" font-family="Liberation Sans,sans-serif" font-size="8.500" font-weight="bold" fill="#111" text-anchor="middle" letter-spacing="-.6">ST</text></g></g></svg>
<div class="abs" style="left:96px;top:221px;height:18px;line-height:18px;padding:0 2px;font-size:12px;white-space:pre;background:#ececec"><span class="sx tr">程序本体</span></div>
<div class="abs" style="left:66px;top:250px;width:11px;height:1px;background:repeating-linear-gradient(90deg,#707070 0 1px,transparent 1px 2px)"></div>
<svg style="left:77px;top:242px;width:16px;height:16px" viewBox="0 0 16 16"><g><path d="M2 1h7l2 2v10H2z" fill="#70a8f0" stroke="#a8c4ec" stroke-width=".8"/><path d="M3 2h5v9H3z" fill="#a4ccff" opacity=".7"/><g transform="translate(5.500,6.500)"><rect x=".5" y=".5" width="9" height="8" fill="#fff" stroke="#3838d8" stroke-width="1"/><path d="M.5 3.300h9M.5 6h9M3.500 .5v8" stroke="#3838d8" stroke-width="1"/><rect x="4" y="3.800" width="5" height="1.700" fill="#c8c8ff"/></g></g></svg>
<div class="abs" style="left:96px;top:241px;height:18px;line-height:18px;padding:0 2px;font-size:12px;white-space:pre"><span class="sx tr">局部标签</span></div>
<div class="abs" style="left:47px;top:270px;width:11px;height:1px;background:repeating-linear-gradient(90deg,#707070 0 1px,transparent 1px 2px)"></div>
<div class="abs" style="left:43px;top:266px;width:9px;height:9px;background:#fff;border:1px solid #848484"></div>
<div class="abs" style="left:45px;top:270px;width:5px;height:1px;background:#000"></div>
<div class="abs" style="left:47px;top:268px;width:1px;height:5px;background:#000"></div>
<svg style="left:58px;top:262px;width:16px;height:16px" viewBox="0 0 16 16"><g><g><path d="M1 4.500q0-1 1-1h3.500l1.500 1.500h7q1 0 1 1V14q0 1-1 1H2q-1 0-1-1z" fill="url(#gf)" stroke="#b87c08" stroke-width=".9"/></g><rect x="6" y="5" width="9" height="8" fill="#30a030" stroke="#186018" stroke-width=".6"/><path d="M3.500 7.500h3.500M3.500 10.500h3.500" stroke="#208020" stroke-width="1.400"/><path d="M7.500 7h6M7.500 9.500h6" stroke="#78d878" stroke-width=".9"/><path d="M13.500 4v9" stroke="#fff" stroke-width="1"/></g></svg>
<div class="abs" style="left:77px;top:261px;height:18px;line-height:18px;padding:0 2px;font-size:12px;white-space:pre;width:34px"><span class="sx tr" style="transform:scaleX(0.885)">S_RTI</span></div>
<div class="abs" style="left:47px;top:290px;width:11px;height:1px;background:repeating-linear-gradient(90deg,#707070 0 1px,transparent 1px 2px)"></div>
<div class="abs" style="left:43px;top:286px;width:9px;height:9px;background:#fff;border:1px solid #848484"></div>
<div class="abs" style="left:45px;top:290px;width:5px;height:1px;background:#000"></div>
<svg style="left:58px;top:282px;width:16px;height:16px" viewBox="0 0 16 16"><g><g><path d="M1 4.500q0-1 1-1h3.500l1.500 1.500h7q1 0 1 1V14q0 1-1 1H2q-1 0-1-1z" fill="url(#gf)" stroke="#b87c08" stroke-width=".9"/></g><rect x="6" y="5" width="9" height="8" fill="#30a030" stroke="#186018" stroke-width=".6"/><path d="M3.500 7.500h3.500M3.500 10.500h3.500" stroke="#208020" stroke-width="1.400"/><path d="M7.500 7h6M7.500 9.500h6" stroke="#78d878" stroke-width=".9"/><path d="M13.500 4v9" stroke="#fff" stroke-width="1"/></g></svg>
<div class="abs" style="left:77px;top:281px;height:18px;line-height:18px;padding:0 2px;font-size:12px;white-space:pre;width:39px"><span class="sx tr" style="transform:scaleX(0.885)">S_RTR</span></div>
<div class="abs" style="left:66px;top:310px;width:11px;height:1px;background:repeating-linear-gradient(90deg,#707070 0 1px,transparent 1px 2px)"></div>
<svg style="left:77px;top:302px;width:16px;height:16px" viewBox="0 0 16 16"><g><g transform="translate(2,.5)"><path d="M.5 .5h8l3 3v11H.5z" fill="url(#gst)" stroke="#8c94a4" stroke-width=".9"/><path d="M8.500 .5v3h3" fill="#e4e8f0" stroke="#8c94a4" stroke-width=".7"/><text x="5.600" y="11.500" font-family="Liberation Sans,sans-serif" font-size="8.500" font-weight="bold" fill="#111" text-anchor="middle" letter-spacing="-.6">ST</text></g></g></svg>
<div class="abs" style="left:96px;top:301px;height:18px;line-height:18px;padding:0 2px;font-size:12px;white-space:pre"><span class="sx tr">程序本体</span></div>
<div class="abs" style="left:66px;top:330px;width:11px;height:1px;background:repeating-linear-gradient(90deg,#707070 0 1px,transparent 1px 2px)"></div>
<svg style="left:77px;top:322px;width:16px;height:16px" viewBox="0 0 16 16"><g><path d="M2 1h7l2 2v10H2z" fill="#70a8f0" stroke="#a8c4ec" stroke-width=".8"/><path d="M3 2h5v9H3z" fill="#a4ccff" opacity=".7"/><g transform="translate(5.500,6.500)"><rect x=".5" y=".5" width="9" height="8" fill="#fff" stroke="#3838d8" stroke-width="1"/><path d="M.5 3.300h9M.5 6h9M3.500 .5v8" stroke="#3838d8" stroke-width="1"/><rect x="4" y="3.800" width="5" height="1.700" fill="#c8c8ff"/></g></g></svg>
<div class="abs" style="left:96px;top:321px;height:18px;line-height:18px;padding:0 2px;font-size:12px;white-space:pre"><span class="sx tr">局部标签</span></div>
</div>
<div class="abs" style="left:0;top:78px;width:1px;height:348px;background:#bcbcd6"></div>
<div class="abs" style="left:163px;top:78px;width:15px;height:332px;background:#f0f0f0"></div>
<div class="abs" style="left:170px;top:144px;width:2px;height:198px;background:#8c8c8c"></div>
<div class="abs" style="left:0;top:410px;width:178px;height:16px;background:#f0f0f0"></div>
<div class="abs" style="left:18px;top:417px;width:120px;height:2px;background:#8c8c8c"></div>
<div class="abs" style="left:178px;top:52px;width:2px;height:374px;background:#c4c4dc"></div>
<div class="abs" style="left:0;top:426px;width:180px;height:7px;background:linear-gradient(#b4b4d0,#8e8eb2)"></div>
<div class="abs" style="left:72px;top:428px;width:36px;height:2px;background:repeating-linear-gradient(90deg,#fff 0 2px,transparent 2px 4px)"></div>
<div class="abs" style="left:0;top:433px;width:180px;height:32px;background:linear-gradient(#fde7a6 0,#fbc765 45%,#f3a01c 100%);border-top:1px solid #fff0c8;border-bottom:1px solid #c88420"></div>
<svg style="left:5px;top:436px;width:26px;height:26px" viewBox="0 0 26 26"><g><path d="M1 14l5-1V4l10-3v11L6 14.500z" fill="#6c7078"/><path d="M7 5l8-2.500v8L7 13z" fill="#9aa0a8"/><path d="M1 14.500l5-.8 1 .8-5 1z" fill="#888"/><rect x="9" y="9" width="5.500" height="14" fill="#e82818"/><path d="M10.300 10v12" stroke="#ff8070" stroke-width="1"/><rect x="15" y="8" width="4.500" height="15" fill="#c8c8c8" stroke="#222" stroke-width=".8"/><rect x="20" y="7" width="4" height="15.500" fill="#555" stroke="#111" stroke-width=".7"/><path d="M15.800 10h3M15.800 12.500h3M15.800 15h3M20.800 9.500h2.500M20.800 12h2.500" stroke="#111" stroke-width="1"/><rect x="16" y="17" width="2.500" height="3" fill="#18a030"/></g></svg>
<div class="abs" style="left:35px;top:441px;height:16px;line-height:16px;font-size:12px;font-weight:bold">工程</div>
<div class="abs" style="left:0;top:465px;width:180px;height:32px;background:linear-gradient(#dedeee 0,#c4c4dc 45%,#9a9abc 100%);border-top:1px solid #ececf6;border-bottom:1px solid #8686aa"></div>
<svg style="left:5px;top:468px;width:26px;height:26px" viewBox="0 0 26 26"><g><path d="M1 3.500C5 2 9 2.500 12 4.500 15 2.500 19 2 23 3.500V15.500C19 14.500 15 15 12 17 9 15 5 14.500 1 15.500z" fill="#f0e8d0" stroke="#8c7c58" stroke-width="1"/><path d="M12 4.500V17" stroke="#a89870" stroke-width="1"/><path d="M1 15.500v1.500c4-1 8-.5 11 1.500 3-2 7-2.500 11-1.500v-1.500" fill="#6c5c38"/><path d="M3 6c3-.8 5-.5 7.500.8M3 8.500c3-.8 5-.5 7.500.8M3 11c3-.8 5-.5 7.500.8" stroke="#c0b48c" stroke-width=".8" fill="none"/><path d="M16 11c2-1.500 5-1 6 1.500l1 5.500-2 3h-5l-1.500-4z" fill="#f0c038" stroke="#c08c10" stroke-width=".7"/><path d="M14 21h10v3H14z" fill="#38a838"/></g></svg>
<div class="abs" style="left:35px;top:473px;height:16px;line-height:16px;font-size:12px;font-weight:bold">用户库</div>
<div class="abs" style="left:0;top:497px;width:180px;height:32px;background:linear-gradient(#dedeee 0,#c4c4dc 45%,#9a9abc 100%);border-top:1px solid #ececf6;border-bottom:1px solid #8686aa"></div>
<svg style="left:5px;top:500px;width:26px;height:26px" viewBox="0 0 26 26"><g><rect x="4" y="1" width="13" height="11" fill="#18b0e8" stroke="#0c5078" stroke-width="1.200"/><path d="M6 3h6l-4 7H6z" fill="#90e0ff" opacity=".7"/><path d="M2 4v13h12" stroke="#28b028" stroke-width="1.600" fill="none"/><path d="M1 20h14" stroke="#28b028" stroke-width="1.600"/><path d="M5 13h10l2 3H3z" fill="#555"/><rect x="15" y="7" width="9" height="17" fill="#3a3a3a" stroke="#111" stroke-width=".8"/><path d="M16.500 9.500h6M16.500 12h6M16.500 14.500h6M16.500 17h6" stroke="#aaa" stroke-width="1"/><rect x="16.500" y="19.500" width="6" height="2.500" fill="#888"/></g></svg>
<div class="abs" style="left:35px;top:505px;height:16px;line-height:16px;font-size:12px;font-weight:bold">连接目标</div>
<div class="abs" style="left:0;top:529px;width:180px;height:33px;background:linear-gradient(#dedeee 0,#c4c4dc 45%,#9a9abc 100%);border-top:1px solid #ececf6"></div>
<svg style="left:164px;top:537px" width="9" height="15" viewBox="0 0 10 16"><path d="M1.500 1.500l2.500 2.500-2.500 2.500M5.500 1.500L8 4 5.500 6.500" stroke="#000" stroke-width="1.300" fill="none"/><path d="M2 11h6l-3 3.500z" fill="#000"/></svg>
</div>
<div class="abs" style="left:180px;top:106px;width:758px;height:562px;background:#ebebf5"></div>
<div class="abs" style="left:184px;top:106px;width:754px;height:26px;background:linear-gradient(#f2f2f9,#e6e6f2)"></div>
<svg style="left:184px;top:106px" width="754" height="28" viewBox="0 0 754 28">
<defs>
<linearGradient id="tg" x1="0" y1="0" x2="0" y2="1"><stop offset="0" stop-color="#fcfcfe"/><stop offset=".5" stop-color="#ececf5"/><stop offset="1" stop-color="#d2d2e6"/></linearGradient>
<linearGradient id="ta" x1="0" y1="0" x2="0" y2="1"><stop offset="0" stop-color="#fff4dc"/><stop offset=".25" stop-color="#fcd9a0"/><stop offset="1" stop-color="#f7b04a"/></linearGradient>
</defs>
<!-- tab 4 -->
<path d="M633.500 26V8q0-4 4-4H760V26z" fill="url(#tg)" stroke="#2c4ea8" stroke-width="1.200"/>
<!-- tab 3 -->
<path d="M441.500 26V8q0-4 4-4H629q4 0 4 4V26z" fill="url(#tg)" stroke="#2c4ea8" stroke-width="1.200"/>
<!-- tab 1 -->
<path d="M3.500 25.500L26 4.500q1-1 3-1H214q4 0 5 2.500L226 25.500z" fill="url(#tg)" stroke="#2c4ea8" stroke-width="1.200"/>
<!-- active tab 2 -->
<path d="M203 26L224.500 5q1.500-1.500 4-1.500H436q4.500 0 4.500 4.500V26z" fill="url(#ta)" stroke="#2c4ea8" stroke-width="1.200"/>
<path d="M226 5.500H437" stroke="#fff" stroke-width="1" opacity=".8"/>
<rect x="0" y="25.500" width="754" height="2.500" fill="#f6b44e"/>
<path d="M0 25.500H204M440.500 25.500H754" stroke="#2c4ea8" stroke-width="1"/>
</svg>
<svg style="left:217px;top:113px;width:12px;height:15px" viewBox="0 0 12 15"><g><path d="M.5 .5h8l3 3v11H.5z" fill="url(#gst)" stroke="#8c94a4" stroke-width=".9"/><path d="M8.500 .5v3h3" fill="#e4e8f0" stroke="#8c94a4" stroke-width=".7"/><text x="5.600" y="11.500" font-family="Liberation Sans,sans-serif" font-size="8.500" font-weight="bold" fill="#111" text-anchor="middle" letter-spacing="-.6">ST</text></g></svg>
<div class="abs" style="left:234px;top:113px;height:17px;line-height:17px;font-size:12px;white-space:pre"><span class="sx" id="tab1" style="transform:scaleX(.992)">POU_01 [PRG] 程序本体 [ST]</span></div>
<svg style="left:416px;top:113px;width:12px;height:15px" viewBox="0 0 12 15"><g><path d="M.5 .5h8l3 3v11H.5z" fill="url(#gst)" stroke="#8c94a4" stroke-width=".9"/><path d="M8.500 .5v3h3" fill="#e4e8f0" stroke="#8c94a4" stroke-width=".7"/><text x="5.600" y="11.500" font-family="Liberation Sans,sans-serif" font-size="8.500" font-weight="bold" fill="#111" text-anchor="middle" letter-spacing="-.6">ST</text></g></svg>
<div class="abs" style="left:433px;top:113px;height:17px;line-height:17px;font-size:12px;font-weight:bold;white-space:pre"><span class="sx" id="tab2" style="transform:scaleX(.9755)">S_ITR [POU_01.S_ITR_1] 程...</span></div>
<div class="abs" style="left:606px;top:113px;width:15px;height:14px;background:#f4f0e6;border:1px solid #fff;box-shadow:0 0 0 1px #d8c8a8"></div>
<svg style="left:609px;top:116px" width="9" height="8" viewBox="0 0 9 8"><path d="M1 .5l7 7M8 .5l-7 7" stroke="#8c8c8c" stroke-width="1.800"/></svg>
<svg style="left:634px;top:112px;width:16px;height:16px" viewBox="0 0 16 16"><g><path d="M2 1h7l2 2v10H2z" fill="#70a8f0" stroke="#a8c4ec" stroke-width=".8"/><path d="M3 2h5v9H3z" fill="#a4ccff" opacity=".7"/><g transform="translate(5.500,6.500)"><rect x=".5" y=".5" width="9" height="8" fill="#fff" stroke="#3838d8" stroke-width="1"/><path d="M.5 3.300h9M.5 6h9M3.500 .5v8" stroke="#3838d8" stroke-width="1"/><rect x="4" y="3.800" width="5" height="1.700" fill="#c8c8ff"/></g></g></svg>
<div class="abs" style="left:653px;top:113px;height:17px;line-height:17px;font-size:12px;white-space:pre"><span class="sx" id="tab3" style="transform:scaleX(.985)">函数/FB标签设置 S_ITR [FB]</span></div>
<svg style="left:825px;top:112px;width:16px;height:16px" viewBox="0 0 16 16"><g><circle cx="6" cy="6" r="5.500" fill="#2468d8"/><path d="M3 2.500c2-1.500 4-1 5 0 .5 1.500-1 2-2 3S4.500 8 3.500 7 1.500 4 3 2.500zM8 8c1-.5 2.500 0 3 1-.5 1.500-2 2.300-3 2z" fill="#38b838"/><circle cx="4.300" cy="3.800" r="1.400" fill="#fff" opacity=".45"/><g transform="translate(5.500,6.500)"><rect x=".5" y=".5" width="9" height="8" fill="#fff" stroke="#3838d8" stroke-width="1"/><path d="M.5 3.300h9M.5 6h9M3.500 .5v8" stroke="#3838d8" stroke-width="1"/><rect x="4" y="3.800" width="5" height="1.700" fill="#c8c8ff"/></g></g></svg>
<div class="abs" style="left:845px;top:113px;height:17px;line-height:17px;font-size:12px;white-space:pre"><span class="sx" id="tab4" style="transform:scaleX(.985)">全局标签设置 Global1</span></div>
<div class="abs" style="left:184px;top:132px;width:760px;height:536px;background:#fff;border:1px solid #3a62c2"></div>
<div class="abs" style="left:185px;top:133px;width:760px;height:534px;border:1px solid #f5b44c"></div>
<div class="abs" style="left:187px;top:134px;width:760px;height:530px;border-left:1px solid #8a8a8a;border-top:1px solid #8a8a8a;border-bottom:1px solid #b0b0b0"></div>
<div class="abs" style="left:188px;top:135px;width:19px;height:512px;background:#f0f0f0"></div>
<div id="code" class="abs">
<div class="ln g" style="top:156px"><span class="sx" style="left:.6px;transform:scaleX(1.0208)">(*R_OUT </span><span class="sx" style="left:105.5px;transform:scaleX(1.0073)">:= ((OSH - OSL) * (</span><span class="sx" style="left:306px;transform:scaleX(.9928)">I_IN - ISL)/(ISH - ISL)) + OSL</span></div>
<div class="ln g" style="top:179px"><span class="sx" style="transform:scaleX(1.0229)">//R_OUT<span class="zh">：转换结果</span></span></div>
<div class="ln g" style="top:207px"><span class="sx" style="transform:scaleX(1.0074)">//OSH<span class="zh">：转换结果上限</span></span></div>
<div class="ln g" style="top:235px"><span class="sx" style="transform:scaleX(1.0102)">//OSL<span class="zh">：转换结果下限</span></span></div>
<div class="ln g" style="top:263px"><span class="sx" style="transform:scaleX(1.0145)">//I_IN<span class="zh">：换算对象</span></span></div>
<div class="ln g" style="top:291px"><span class="sx" style="transform:scaleX(1.0055)">//ISH<span class="zh">：转换对象上限</span></span></div>
<div class="ln g" style="top:319px"><span class="sx" style="transform:scaleX(0.997)">//ISL<span class="zh">：转换对象下限</span>*)</span></div>
<div class="ln" style="top:352px"><span class="sx" style="transform:scaleX(1.0125)"><b>I_INx</b>:=INT_TO_REAL(<b>I_IN</b>);</span></div>
<div class="ln" style="top:380px"><span class="sx" style="transform:scaleX(1.0149)"><b>ISHx</b>:=INT_TO_REAL(<b>ISH</b>);</span></div>
<div class="ln" style="top:408px"><span class="sx" style="transform:scaleX(1.0157)"><b>ISLx</b>:=INT_TO_REAL(<b>ISL</b>);</span></div>
<div class="ln" style="top:464px"><span class="sx" style="left:.6px;transform:scaleX(1.0147)"><b>R_OUT</b> </span><span class="sx" style="left:87.6px;transform:scaleX(1.0015)">:= ((<b>OSH</b> - <b>OSL</b>) * (<b>I_INx</b> </span><span class="sx" style="left:348.5px;transform:scaleX(.982)">- <b>ISLx</b>)/(<b>ISHx</b> </span><span class="sx" style="left:487.1px;transform:scaleX(.994)">- <b>ISLx</b>)) + <b>OSL</b>;</span></div>
</div>
<div class="abs" style="left:208px;top:331px;width:1px;height:27px;background:#000"></div>
<!-- h scrollbar -->
<div class="abs" style="left:188px;top:647px;width:750px;height:17px;background:linear-gradient(#e8e8e8,#f4f4f4 40%,#e4e4e4);border-top:1px solid #fff"></div>
<div class="abs" style="left:188px;top:647px;width:16px;height:17px;background:#f1f1f1;border-right:1px solid #b8b8b8"></div>
<div class="abs" style="left:192px;top:650px;border:5px solid transparent;border-right:6px solid #000;border-left:0"></div>
<div class="abs" style="left:921px;top:647px;width:15px;height:17px;background:#f1f1f1;border-left:1px solid #b8b8b8;border-right:1px solid #b8b8b8"></div>
<div class="abs" style="left:927px;top:651px;border:4px solid transparent;border-left:5px solid #000;border-right:0"></div>
<div class="abs" style="left:188px;top:663px;width:750px;height:1px;background:#a8a8a8"></div>
<div class="abs" style="left:0;top:668px;width:938px;height:5px;background:#e0e0ee"></div>

</body>
</html>
